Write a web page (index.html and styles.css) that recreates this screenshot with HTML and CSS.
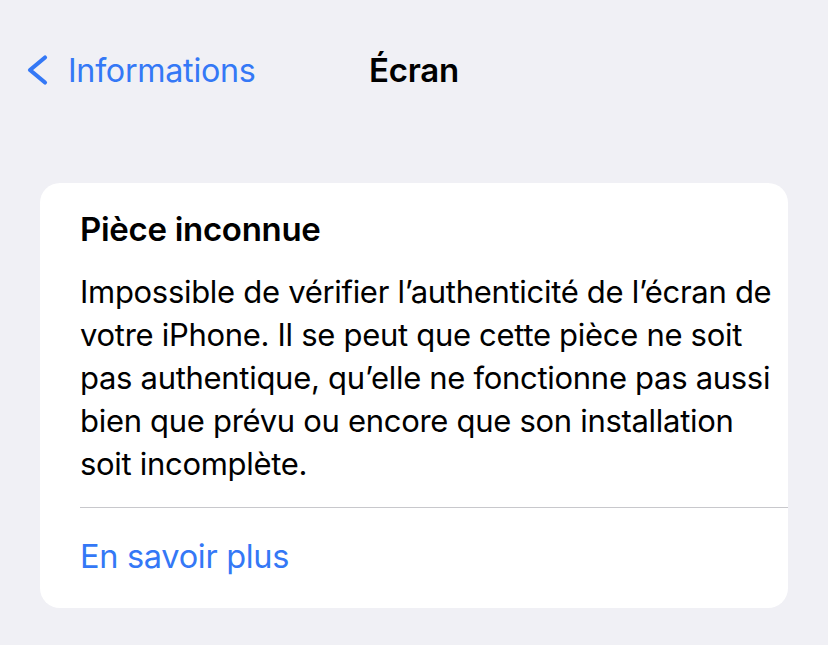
FILE: index.html
```html
<!DOCTYPE html>
<html lang="fr">
<head>
<meta charset="utf-8">
<title>Écran</title>
<link rel="stylesheet" href="styles.css">
</head>
<body>
<header class="nav">
  <a class="back" href="#">
    <svg class="chevron" width="22" height="32" viewBox="0 0 22 32" aria-hidden="true">
      <path d="M19 3.5 L4 16 L19 28.5" fill="none" stroke="currentColor" stroke-width="4.2" stroke-linecap="round" stroke-linejoin="round"/>
    </svg>
    <span>Informations</span>
  </a>
  <h1 class="title">Écran</h1>
  <div></div>
</header>
<main class="content">
  <section class="card">
    <div class="card-body">
      <h2 class="card-title">Pièce inconnue</h2>
      <p class="card-text">Impossible de vérifier l’authenticité de l’écran de<br>votre iPhone. Il se peut que cette pièce ne soit<br>pas authentique, qu’elle ne fonctionne pas aussi<br>bien que prévu ou encore que son installation<br>soit incomplète.</p>
    </div>
    <a class="card-link" href="#">En savoir plus</a>
  </section>
</main>
</body>
</html>
```
FILE: styles.css
```css
* { box-sizing: border-box; }
html, body {
  margin: 0;
  padding: 0;
  background: #f0f0f5;
  font-family: Inter, "Noto Sans", sans-serif;
  color: #000;
}
body { width: 828px; height: 645px; overflow: hidden; }

.nav {
  display: grid;
  grid-template-columns: 1fr auto 1fr;
  align-items: center;
  height: 50px;
  margin-top: 45px;
}
.back {
  display: flex;
  align-items: center;
  gap: 20px;
  margin-left: 26px;
  color: #3478f6;
  text-decoration: none;
  font-size: 32.3px;
  letter-spacing: -0.3px;
}
.chevron { display: block; }
.title {
  margin: 0;
  font-size: 33px;
  font-weight: 600;
  letter-spacing: -0.2px;
}

.content { padding: 88px 40px 0; }
.card {
  background: #fff;
  border-radius: 20px;
  overflow: hidden;
}
.card-body {
  padding: 26px 0 22px;
  margin-left: 40px;
  border-bottom: 1px solid #c8c8cc;
}
.card-title {
  margin: 0 0 21px;
  font-size: 33px;
  font-weight: 600;
  line-height: 40px;
  letter-spacing: -0.3px;
}
.card-text {
  margin: 0;
  font-size: 31px;
  line-height: 43px;
  letter-spacing: -0.3px;
  white-space: nowrap;
}
.card-link {
  display: block;
  padding: 28px 40px 30px;
  color: #3478f6;
  text-decoration: none;
  font-size: 32.5px;
  line-height: 42px;
  letter-spacing: -0.3px;
}
```
